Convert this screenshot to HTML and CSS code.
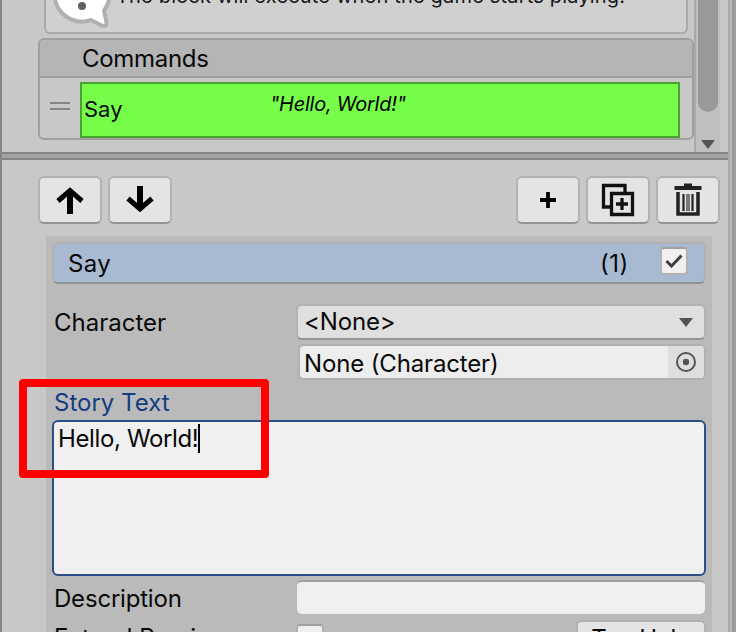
FILE: index.html
```html
<!DOCTYPE html>
<html lang="en">
<head>
<meta charset="utf-8">
<title>Inspector</title>
<link rel="stylesheet" href="styles.css">
</head>
<body>
<div class="window">
  <main class="panel">
    <section class="block-view">
      <div class="block-content">
        <div class="help-box">
          <svg class="help-icon" width="64" height="80" viewBox="0 0 64 80">
            <path d="M41 68A27.500 27.500 0 1 1 54 58.500L56.500 70.500Q57 75 51.500 73.500Z" fill="#fff" stroke="#b0b0b0" stroke-width="4" stroke-linejoin="round"/>
            <circle cx="32" cy="54" r="4" fill="#606060"/>
          </svg>
          <span class="help-text">The block will execute when the game starts playing.</span>
        </div>
        <div class="commands">
          <div class="commands-head"><span class="t-commands">Commands</span></div>
          <div class="command-row">
            <span class="grip"></span>
            <div class="command">
              <span class="command-name">Say</span>
              <span class="command-summary">"Hello, World!"</span>
            </div>
          </div>
        </div>
      </div>
      <div class="scrollbar">
        <div class="thumb"></div>
        <svg width="14" height="9" viewBox="0 0 14 9"><path d="M0 0h14L7 9z" fill="#555550"/></svg>
      </div>
    </section>
    <div class="splitter"></div>
    <section class="command-view">
      <div class="toolbar">
        <button class="btn" aria-label="Up"><svg width="32" height="32" viewBox="0 0 32 32" fill="none" stroke="#000"><path d="M16 30V7" stroke-width="6"/><path d="M4 17L16 6.500l12 10.500" stroke-width="5"/></svg></button>
        <button class="btn" aria-label="Down"><svg width="32" height="32" viewBox="0 0 32 32" fill="none" stroke="#000"><path d="M16 2v23" stroke-width="6"/><path d="M4 14.500L16 25l12-10.500" stroke-width="5"/></svg></button>
        <span class="spacer"></span>
        <button class="btn" aria-label="Add"><svg width="32" height="32" viewBox="0 0 32 32"><path d="M8 16h16M16 8v16" stroke="#000" stroke-width="3.800"/></svg></button>
        <button class="btn" aria-label="Duplicate"><svg width="34" height="34" viewBox="0 0 34 34" fill="none" stroke="#111" stroke-width="3.300"><path d="M9 24H2.500V2.500H24V9M10.500 10.500h21v21h-21zM15 21h12M21 15v12"/></svg></button>
        <button class="btn" aria-label="Delete"><svg width="32" height="34" viewBox="0 0 32 34" fill="none" stroke="#222"><path d="M2.500 5h27" stroke-width="4"/><path d="M12 2h8" stroke-width="3" /><path d="M6 9v22h20V9" stroke-width="3.500"/><path d="M11.500 11v17M20.500 11v17" stroke-width="2.200"/><path d="M16 11v17" stroke="#777" stroke-width="4"/></svg></button>
      </div>
      <div class="inspector">
        <div class="title-bar">
          <span class="title">Say</span>
          <span class="count">(1)</span>
          <span class="check"><svg width="18" height="14" viewBox="0 0 18 14"><path d="M1.500 7L6.500 12L16.500 1.500" fill="none" stroke="#404040" stroke-width="3"/></svg></span>
        </div>
        <div class="field character">
          <label class="label">Character</label>
          <div class="dropdown"><span class="t-none">&lt;None&gt;</span><svg width="14" height="9" viewBox="0 0 14 9"><path d="M0 0h14L7 9z" fill="#555550"/></svg></div>
        </div>
        <div class="object-field">
          <span class="t-object">None (Character)</span>
          <span class="picker"><svg width="20" height="20" viewBox="0 0 20 20"><circle cx="10" cy="10" r="9" fill="none" stroke="#555" stroke-width="2"/><circle cx="10" cy="10" r="3.200" fill="#555"/></svg></span>
        </div>
        <div class="story-label"><span class="t-story">Story Text</span></div>
        <div class="story-input"><span class="t-hello">Hello, World!</span><span class="caret"></span></div>
        <div class="field description">
          <label class="label t-description">Description</label>
          <div class="text-input"></div>
        </div>
        <div class="field extend">
          <label class="label">Extend Previous</label>
          <span class="checkbox"></span>
          <button class="tag-help">Tag Help</button>
        </div>
      </div>
    </section>
  </main>
  <div class="highlight"></div>
</div>
</body>
</html>
```
FILE: styles.css
```css
* { box-sizing: border-box; }
body { margin: 0; overflow: hidden; font: 24px/30px Inter, "Liberation Sans", sans-serif; color: #090909; }
svg { display: block; flex: none; }
span, label { white-space: nowrap; }
.window { position: relative; width: 736px; height: 632px; overflow: hidden; padding-left: 2px; padding-right: 8px;
  background: linear-gradient(to right, #858585 2px, #c8c8c8 2px, #c8c8c8 728px, #a8a8a8 728px, #a8a8a8 730px, #b8b8b8 730px, #b8b8b8 732px, #959595 732px, #a0a0a0 736px); }
.panel { height: 632px; background: #c8c8c8; overflow: hidden; }

.block-view { display: flex; height: 152px; padding-right: 8px; }
.block-content { width: 692px; padding-left: 36px; }
.help-box { display: flex; align-items: flex-end; height: 34px; width: 644px; margin-left: 6px; border: 2px solid #a9a9a9; border-top: 0; border-radius: 0 0 6px 6px; background: #d0d0d0; }
.help-icon { margin-left: 4px; }
.help-text { font-size: 20px; line-height: 24px; letter-spacing: .18px; margin: 0 0 24px 2px; color: #161616; }
.commands { width: 656px; height: 102px; margin-top: 4px; border: 2px solid #9f9f9f; border-radius: 6px; }
.commands-head { height: 38px; padding: 4px 0 0 42px; border-bottom: 2px solid #9f9f9f; background: #b5b5b5; border-radius: 4px 4px 0 0; }
.t-commands { letter-spacing: -.3px; }
.command-row { display: flex; padding: 4px 0 0 10px; }
.grip { width: 20px; height: 8px; margin: 20px 10px 0 0; border: solid #858585; border-width: 2px 0; }
.command { display: flex; width: 600px; height: 56px; border: 2px solid #4aa32f; background: #75fd4a; }
.command-name { width: 188px; padding-left: 2px; font-size: 22px; line-height: 50px; }
.command-summary { font-size: 20px; font-style: italic; line-height: 40px; letter-spacing: -.25px; color: #000; }
.scrollbar { display: flex; flex-direction: column; align-items: center; width: 26px; border-left: 2px solid #a9a9a9; background: #bfbfbf; }
.thumb { width: 20px; height: 112px; margin-bottom: 28px; border-radius: 0 0 10px 10px; background: #999; }

.splitter { height: 8px; border: solid #858585; border-width: 2px 0; background: #a2a2a2; }

.toolbar { display: flex; gap: 6px; padding: 16px 8px 12px 36px; }
.spacer { flex: 1; }
.btn { display: flex; align-items: center; justify-content: center; width: 64px; height: 48px; padding: 0; border: 2px solid #b2b2b2; border-bottom-color: #939393; border-radius: 6px; background: #e4e4e4; }
.inspector { width: 666px; height: 420px; margin-left: 44px; padding: 6px; background: #bababa; }
.title-bar { display: flex; height: 42px; padding-left: 14px; border: 2px solid #b1b1b1; border-bottom-color: #8f9297; border-radius: 6px; background: #a8bad1; line-height: 40px; }
.title { width: 532px; letter-spacing: .4px; }
.count { width: 60px; letter-spacing: .5px; }
.check { display: flex; align-items: center; justify-content: center; width: 28px; height: 28px; margin-top: 3px; border: 2px solid #b2b2b2; border-top-color: #a0a0a0; border-radius: 4px; background: #f0f0f0; }
.field { display: flex; }
.label { width: 244px; padding-left: 2px; }
.character { height: 36px; margin-top: 20px; line-height: 38px; }
.dropdown { display: flex; align-items: center; justify-content: space-between; width: 410px; height: 36px; padding: 0 11px 0 6px; border: 2px solid #b2b2b2; border-bottom-color: #939393; border-radius: 6px; background: #dfdfdf; }
.t-none, .t-object { letter-spacing: -.15px; }
.object-field { display: flex; justify-content: space-between; width: 408px; height: 36px; margin: 4px 0 0 246px; padding-left: 4px; border: 2px solid #b0b0b0; border-radius: 6px; background: #ededed; line-height: 35px; overflow: hidden; }
.picker { display: flex; align-items: center; justify-content: center; width: 36px; background: #dedede; }
.story-label { height: 40px; padding-left: 2px; color: #143c82; line-height: 45px; }
.story-input { display: flex; width: 654px; height: 156px; padding: 2px 4px; border: 2px solid #2d4f87; border-radius: 6px; background: #f0f0f0; }
.t-hello { letter-spacing: -.37px; }
.caret { width: 2px; height: 29px; background: #000; }
.description { height: 37px; margin-top: 4px; line-height: 37px; }
.t-description { letter-spacing: -.2px; }
.text-input { width: 408px; height: 34px; margin-left: 1px; border-top: 2px solid #a0a0a0; border-radius: 5px; background: #f0f0f0; }
.extend { margin-top: 3px; line-height: 36px; }
.checkbox { width: 28px; height: 28px; margin-top: 4px; border: 2px solid #b0b0b0; border-top-color: #a0a0a0; border-radius: 4px; background: #f0f0f0; }
.tag-help { width: 130px; height: 36px; margin-left: 252px; padding: 1px 0 0; border: 2px solid #b2b2b2; border-radius: 6px; background: #e4e4e4; color: #090909; font: inherit; line-height: 30px; letter-spacing: -.2px; }

.highlight { position: absolute; left: 19px; top: 379px; width: 250px; height: 99px; border: 8px solid #f00; border-radius: 4px; }
```
